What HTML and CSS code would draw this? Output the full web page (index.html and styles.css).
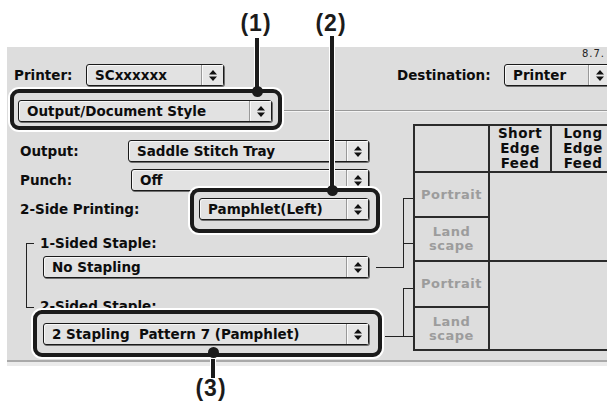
FILE: index.html
```html
<!DOCTYPE html>
<html lang="en">
<head>
  <meta charset="utf-8" />
  <title>Output/Document Style</title>
  <link rel="stylesheet" href="styles.css">
</head>
<body>
<svg class="defs" width="0" height="0">
  <symbol id="arrows" viewBox="0 0 8 11">
    <path d="M4 0L8 4.5H0z M0 6.5H8L4 11z"/>
  </symbol>
</svg>

<div class="figure">
  <div class="panel">
    <div class="version">8.7.</div>

    <!-- printer / destination -->
    <div class="printer-row">
      <span class="label label-printer">Printer:</span>
      <div class="popup popup-printer">
        <span class="popup-text">SCxxxxxx</span>
        <span class="popup-arrows"><svg width="8" height="11"><use href="#arrows"/></svg></span>
      </div>
      <span class="label label-destination">Destination:</span>
      <div class="popup popup-destination">
        <span class="popup-text">Printer</span>
        <span class="popup-arrows"><svg width="8" height="11"><use href="#arrows"/></svg></span>
      </div>
    </div>

    <div class="style-row">
      <div class="popup popup-style">
        <span class="popup-text">Output/Document Style</span>
        <span class="popup-arrows"><svg width="8" height="11"><use href="#arrows"/></svg></span>
      </div>
      <div class="separator"></div>
    </div>

    <div class="main">
      <div class="settings">
        <div class="form-row row-output">
          <span class="label">Output:</span>
          <div class="popup popup-output">
            <span class="popup-text">Saddle Stitch Tray</span>
            <span class="popup-arrows"><svg width="8" height="11"><use href="#arrows"/></svg></span>
          </div>
        </div>
        <div class="form-row row-punch">
          <span class="label">Punch:</span>
          <div class="popup popup-punch">
            <span class="popup-text">Off</span>
            <span class="popup-arrows"><svg width="8" height="11"><use href="#arrows"/></svg></span>
          </div>
        </div>
        <div class="form-row row-duplex">
          <span class="label">2-Side Printing:</span>
          <div class="popup popup-duplex">
            <span class="popup-text">Pamphlet(Left)</span>
            <span class="popup-arrows"><svg width="8" height="11"><use href="#arrows"/></svg></span>
          </div>
        </div>

        <!-- 1-sided staple group -->
        <div class="staple-group">
          <span class="label group-label">1-Sided Staple:</span>
          <div class="popup popup-staple">
            <span class="popup-text">No Stapling</span>
            <span class="popup-arrows"><svg width="8" height="11"><use href="#arrows"/></svg></span>
          </div>
        </div>
        <span class="label label-two-sided">2-Sided Staple:</span>
        <div class="popup popup-staple popup-pattern">
          <span class="popup-text">2&nbsp;Stapling&nbsp;&nbsp;Pattern 7 (Pamphlet)</span>
          <span class="popup-arrows"><svg width="8" height="11"><use href="#arrows"/></svg></span>
        </div>
      </div>

      <div class="feed-table">
        <div class="cell"></div>
        <div class="cell head">Short<br>Edge<br>Feed</div>
        <div class="cell head">Long<br>Edge<br>Feed</div>
        <div class="cell"></div>
        <div class="cell orient">Portrait</div>
        <div class="cell wide"></div>
        <div class="cell orient">Land<br>scape</div>
        <div class="cell orient">Portrait</div>
        <div class="cell wide"></div>
        <div class="cell orient">Land<br>scape</div>
      </div>
    </div>

    <!-- lines from the staple menus to the table -->
    <svg class="connectors" width="600" height="313">
      <path d="M396.5 151V220.5 M396 151.5H406 M396 196.5H406 M369 220.5H397
               M396.5 241V289.5 M396 241.5H406 M396 289.5H406 M378 289.5H397"/>
    </svg>
  </div>

  <!-- callouts -->
  <div class="pointer pointer-1"></div>
  <div class="pointer pointer-2"></div>
  <div class="pointer pointer-3"></div>
  <div class="frame frame-1"></div>
  <div class="frame frame-2"></div>
  <div class="frame frame-3"></div>
  <div class="dot dot-1"></div>
  <div class="dot dot-2"></div>
  <div class="dot dot-3"></div>
  <div class="callout-num num-1">(1)</div>
  <div class="callout-num num-2">(2)</div>
  <div class="callout-num num-3">(3)</div>
</div>
</body>
</html>
```

FILE: styles.css
```css
body{
  margin: 0;
  background: #fff;
  font-family: "DejaVu Sans", sans-serif;
}
.defs{
  position: absolute;
}
.figure{
  position: relative;
  width: 607px;
  height: 415px;
  padding-top: 47px;
  box-sizing: border-box;
  overflow: hidden;
}

/* dialog panel */
.panel{
  position: relative;
  margin-left: 7px;
  width: 600px;
  height: 313px;
  background: #dddddd;
  border-bottom: 2px solid #a9a9a9;
  box-shadow: 0 4px 0 #ebebeb;
  overflow: hidden;
  color: #0d0d0d;
  font-size: 13.5px;
  font-weight: bold;
}
.version{
  height: 14px;
  line-height: 14px;
  padding-right: 2px;
  text-align: right;
  font-size: 10px;
  font-weight: normal;
  letter-spacing: 1px;
  color: #222;
}
.label{
  flex: none;
  white-space: nowrap;
}

/* popup menus */
.popup{
  flex: none;
  display: flex;
  height: 22px;
  box-sizing: border-box;
  border: 1px solid #1a1a1a;
  border-radius: 3px;
  background: #e2e2e2;
  box-shadow: 1px 1px 0 #6f6f6f, inset 1px 1px 0 #f7f7f7;
}
.popup-text{
  flex: 1;
  padding-left: 8px;
  line-height: 20px;
  white-space: nowrap;
  overflow: hidden;
}
.popup-arrows{
  width: 21px;
  display: flex;
  align-items: center;
  justify-content: center;
  border-left: 1px solid #999;
  background: #e6e6e6;
  box-shadow: inset 1px 1px 0 #fafafa;
  fill: #111;
}

.printer-row{
  display: flex;
  align-items: center;
  margin-top: 3px;
  height: 22px;
}
.label-printer{
  margin-left: 7px;
  width: 72px;
}
.popup-printer{
  width: 138px;
}
.label-destination{
  margin-left: 173px;
  width: 107px;
}
.popup-destination{
  width: 107px;
}

.style-row{
  display: flex;
  align-items: flex-start;
  margin-top: 14px;
  height: 23px;
}
.popup-style{
  margin-left: 11px;
  width: 254px;
}
.separator{
  flex: 1;
  margin: 10px 0 0 11px;
  border-top: 1px solid #999;
  border-bottom: 1px solid #f4f4f4;
}

/* settings and feed table */
.main{
  display: flex;
  align-items: flex-start;
}
.settings{
  flex: none;
  width: 406px;
  display: flex;
  flex-direction: column;
  align-items: flex-start;
}
.form-row{
  display: flex;
  align-items: center;
  height: 22px;
  margin-top: 7px;
}
.form-row .label{
  margin-left: 13px;
}
.row-output{
  margin-top: 17px;
}
.row-output .label{
  width: 108px;
}
.popup-output{
  width: 241px;
}
.row-punch .label{
  width: 111px;
}
.popup-punch{
  width: 238px;
}
.row-duplex .label{
  width: 179px;
}
.popup-duplex{
  width: 170px;
}

.staple-group{
  position: relative;
  display: flex;
  flex-direction: column;
  align-items: flex-start;
  margin: 23px 0 0 19px;
  height: 65px;
  box-sizing: border-box;
  border-left: 1px solid #222;
}
.staple-group::before,
.staple-group::after{
  content: "";
  position: absolute;
  left: -1px;
  width: 8px;
  border-top: 1px solid #222;
}
.staple-group::before{
  top: 0;
}
.staple-group::after{
  bottom: 0;
}
.group-label{
  margin: -7px 0 0 13px;
  height: 14px;
  line-height: 14px;
}
.popup-staple{
  margin: 6px 0 0 16px;
  width: 326px;
}
.label-two-sided{
  margin: -9px 0 0 33px;
  height: 14px;
  line-height: 14px;
}
.popup-pattern{
  margin: 10px 0 0 36px;
}

.feed-table{
  flex: none;
  margin-top: 1px;
  display: grid;
  grid-template-columns: 73px 60px 62px 60px;
  grid-template-rows: 45px 43px 42px 44px 41px;
  gap: 2px;
  border: 2px solid #2b2b2b;
  background: #2b2b2b;
}
.cell{
  background: #dddddd;
}
.head{
  display: flex;
  align-items: center;
  justify-content: center;
  text-align: center;
  font-size: 13.5px;
  line-height: 15px;
  letter-spacing: 0.5px;
}
.orient{
  display: flex;
  align-items: center;
  justify-content: center;
  text-align: center;
  font-size: 13px;
  line-height: 14px;
  color: #9c9c9c;
  letter-spacing: 0.5px;
}
.wide{
  grid-column: 2 / -1;
  grid-row: span 2;
}
.connectors{
  position: absolute;
  left: 0;
  top: 0;
  fill: none;
  stroke: #222;
  stroke-width: 1;
}

/* callouts */
.pointer{
  position: absolute;
  width: 4px;
  background: #1b1b1b;
  box-shadow: 0 0 0 1px #fff;
}
.pointer-1{
  left: 255px;
  top: 38px;
  height: 52px;
}
.pointer-2{
  left: 330px;
  top: 36px;
  height: 153px;
}
.pointer-3{
  left: 211px;
  top: 354px;
  height: 24px;
}
.frame{
  position: absolute;
  box-sizing: border-box;
  border: 4px solid #1b1b1b;
  border-radius: 9px;
  box-shadow: 0 0 0 2px #fff;
}
.frame-1{
  left: 10px;
  top: 89px;
  width: 272px;
  height: 41px;
}
.frame-2{
  left: 190px;
  top: 188px;
  width: 190px;
  height: 45px;
}
.frame-3{
  left: 33px;
  top: 310px;
  width: 349px;
  height: 47px;
}
.dot{
  position: absolute;
  width: 11px;
  height: 11px;
  border-radius: 50%;
  background: #1b1b1b;
}
.dot-1{
  left: 252px;
  top: 86px;
}
.dot-2{
  left: 327px;
  top: 185px;
}
.dot-3{
  left: 208px;
  top: 347px;
}
.callout-num{
  position: absolute;
  width: 40px;
  text-align: center;
  font: bold 23px/1 "Liberation Sans", Arial, sans-serif;
  letter-spacing: 1px;
  color: #1b1b1b;
}
.num-1{
  left: 236px;
  top: 12px;
}
.num-2{
  left: 311px;
  top: 12px;
}
.num-3{
  left: 191px;
  top: 377px;
}
```
